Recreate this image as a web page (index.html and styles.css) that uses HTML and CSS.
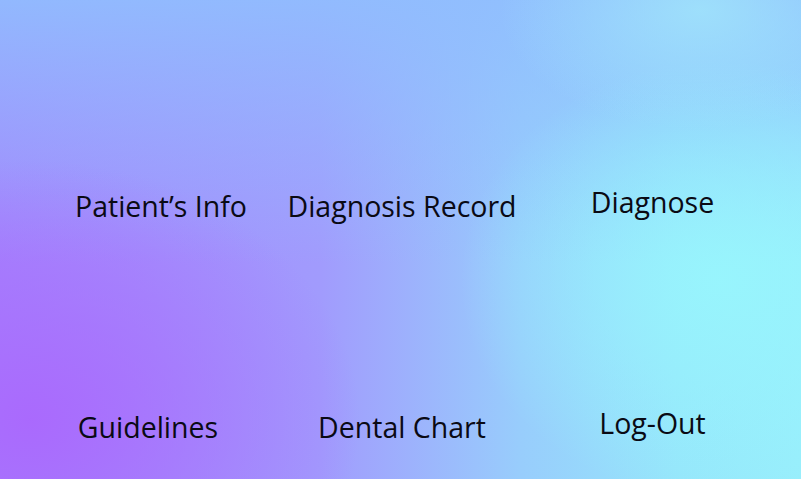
FILE: index.html
```html
<!DOCTYPE html>
<html>
<head>
<meta charset="utf-8">
<link rel="stylesheet" href="styles.css">
</head>
<body>
<main class="screen">
  <div class="menu">
    <div class="item item-left item-patient">Patient’s Info</div>
    <div class="item item-mid">Diagnosis Record</div>
    <div class="item item-right">Diagnose</div>
    <div class="item item-left item-guide">Guidelines</div>
    <div class="item item-mid">Dental Chart</div>
    <div class="item item-right">Log-Out</div>
  </div>
</main>
</body>
</html>
```

FILE: styles.css
```css
html, body {
  margin: 0;
  padding: 0;
  width: 801px;
  height: 479px;
  overflow: hidden;
}

.screen {
  width: 801px;
  height: 479px;
  background:
    radial-gradient(ellipse 200px 120px at 700px 10px, rgba(160, 228, 251, 0.85), rgba(160, 228, 251, 0) 100%),
    radial-gradient(ellipse 260px 220px at 720px 280px, rgba(152, 246, 253, 0.9), rgba(152, 246, 253, 0) 100%),
    radial-gradient(ellipse 330px 260px at 30px 420px, rgba(170, 104, 253, 0.95), rgba(170, 104, 253, 0) 100%),
    linear-gradient(to bottom, rgba(144, 190, 254, 0.9) 0%, rgba(144, 190, 254, 0) 55%),
    linear-gradient(to right, #a385fd 0%, #a19bfd 40%, #98cdfc 65%, #96e6fb 85%, #98eefc 100%);
  font-family: "Open Sans", "Noto Sans", sans-serif;
  color: #0a0a14;
}

.menu {
  display: grid;
  grid-template-columns: 306px 192px 303px;
  grid-template-rows: auto auto;
  row-gap: 182px;
  padding-top: 185px;
}

.item {
  font-size: 28.5px;
  line-height: 35px;
  text-align: center;
  white-space: nowrap;
  display: flex;
  justify-content: center;
}

.item-left {
  padding-top: 4px;
}

.item-patient {
  padding-left: 16px;
}

.item-guide {
  padding-right: 10px;
}

.item-mid {
  padding-top: 4px;
}

.item-right {
  padding-left: 6px;
}
```
